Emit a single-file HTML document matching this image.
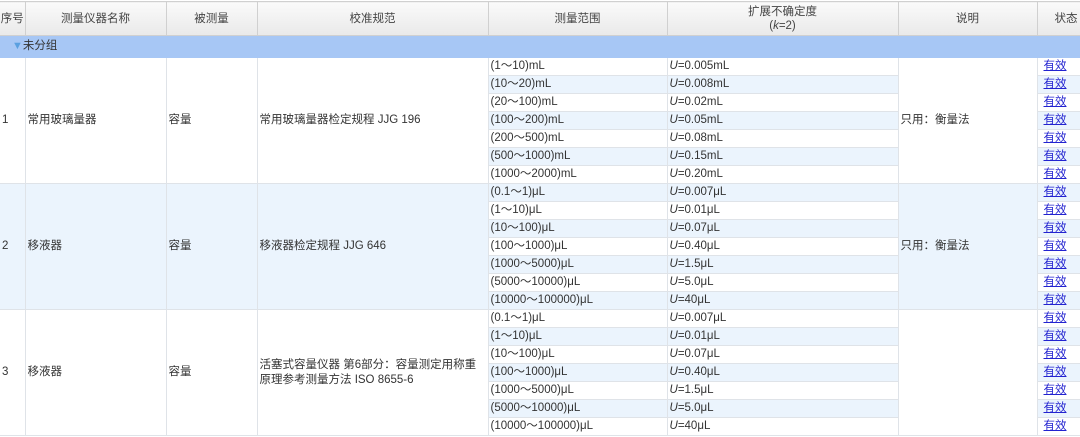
<!DOCTYPE html>
<html><head><meta charset="utf-8"><style>
body{margin:0;background:#fff;width:1080px;height:437px;overflow:hidden;font-family:"Liberation Sans","Noto Sans CJK SC",sans-serif;font-size:11.5px;color:#333}
table{border-collapse:collapse;table-layout:fixed;width:1080px;position:absolute;left:0;top:1px}
td,th{border:1px solid #dfe3e8;padding:0 2px;height:17px;line-height:17px;white-space:nowrap;overflow:hidden}
td:first-child,th:first-child{border-left:none}
th{font-weight:normal;color:#444;height:33px;line-height:14px;background:linear-gradient(#fafafa,#e9e9e9);border-color:#d0d0d0}
thead tr{border-top:1px solid #8a94a0}
tr.g td{background:#a7c7f5;height:21px;line-height:21px;border-color:#a7c7f5}
.b{background:#ebf4fd}
.w{background:#fff}
a{color:#2323d0;text-decoration:underline;margin-left:4px}
td.wr{white-space:normal;line-height:15px}
</style></head><body>
<table>
<colgroup><col style="width:25px"><col style="width:141px"><col style="width:91px"><col style="width:231px"><col style="width:179px"><col style="width:231px"><col style="width:139px"><col style="width:43px"></colgroup>
<thead><tr><th style="padding:0">序号</th><th>测量仪器名称</th><th>被测量</th><th>校准规范</th><th>测量范围</th><th>扩展不确定度<br>(<i>k</i>=2)</th><th>说明</th><th style="text-align:right">状态</th></tr></thead>
<tbody>
<tr class="g"><td colspan="8"><span style="color:#5aa0e0;font-size:11px;margin-left:10px">▼</span>未分组</td></tr>
<tr><td rowspan="7" class="w">1</td><td rowspan="7" class="w">常用玻璃量器</td><td rowspan="7" class="w">容量</td><td rowspan="7" class="w">常用玻璃量器检定规程 JJG 196</td><td class="w">(1～10)mL</td><td class="w"><i>U</i>=0.005mL</td><td rowspan="7" class="w">只用：衡量法</td><td class="w"><a>有效</a></td></tr>
<tr class="b"><td>(10～20)mL</td><td><i>U</i>=0.008mL</td><td><a>有效</a></td></tr>
<tr class="w"><td>(20～100)mL</td><td><i>U</i>=0.02mL</td><td><a>有效</a></td></tr>
<tr class="b"><td>(100～200)mL</td><td><i>U</i>=0.05mL</td><td><a>有效</a></td></tr>
<tr class="w"><td>(200～500)mL</td><td><i>U</i>=0.08mL</td><td><a>有效</a></td></tr>
<tr class="b"><td>(500～1000)mL</td><td><i>U</i>=0.15mL</td><td><a>有效</a></td></tr>
<tr class="w"><td>(1000～2000)mL</td><td><i>U</i>=0.20mL</td><td><a>有效</a></td></tr>
<tr class="b"><td rowspan="7" class="b">2</td><td rowspan="7" class="b">移液器</td><td rowspan="7" class="b">容量</td><td rowspan="7" class="b">移液器检定规程 JJG 646</td><td>(0.1～1)μL</td><td><i>U</i>=0.007μL</td><td rowspan="7" class="b">只用：衡量法</td><td><a>有效</a></td></tr>
<tr class="w"><td>(1～10)μL</td><td><i>U</i>=0.01μL</td><td><a>有效</a></td></tr>
<tr class="b"><td>(10～100)μL</td><td><i>U</i>=0.07μL</td><td><a>有效</a></td></tr>
<tr class="w"><td>(100～1000)μL</td><td><i>U</i>=0.40μL</td><td><a>有效</a></td></tr>
<tr class="b"><td>(1000～5000)μL</td><td><i>U</i>=1.5μL</td><td><a>有效</a></td></tr>
<tr class="w"><td>(5000～10000)μL</td><td><i>U</i>=5.0μL</td><td><a>有效</a></td></tr>
<tr class="b"><td>(10000～100000)μL</td><td><i>U</i>=40μL</td><td><a>有效</a></td></tr>
<tr class="w"><td rowspan="7" class="w">3</td><td rowspan="7" class="w">移液器</td><td rowspan="7" class="w">容量</td><td rowspan="7" class="w wr">活塞式容量仪器 第6部分：容量测定用称重原理参考测量方法 ISO 8655-6</td><td>(0.1～1)μL</td><td><i>U</i>=0.007μL</td><td rowspan="7" class="w"></td><td><a>有效</a></td></tr>
<tr class="b"><td>(1～10)μL</td><td><i>U</i>=0.01μL</td><td><a>有效</a></td></tr>
<tr class="w"><td>(10～100)μL</td><td><i>U</i>=0.07μL</td><td><a>有效</a></td></tr>
<tr class="b"><td>(100～1000)μL</td><td><i>U</i>=0.40μL</td><td><a>有效</a></td></tr>
<tr class="w"><td>(1000～5000)μL</td><td><i>U</i>=1.5μL</td><td><a>有效</a></td></tr>
<tr class="b"><td>(5000～10000)μL</td><td><i>U</i>=5.0μL</td><td><a>有效</a></td></tr>
<tr class="w"><td>(10000～100000)μL</td><td><i>U</i>=40μL</td><td><a>有效</a></td></tr>
</tbody></table>
</body></html>
